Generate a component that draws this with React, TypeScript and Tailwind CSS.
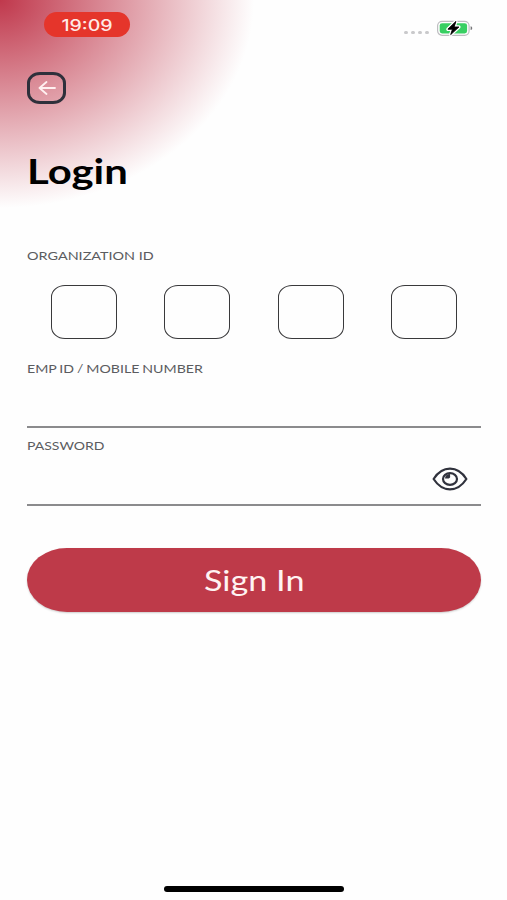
import { useState } from 'react';
import clsx from 'clsx';

const orgDigits = [0, 1, 2, 3];
const signalDots = [0, 1, 2, 3];

const BatteryIcon = () => (
  <svg width="38" height="18" viewBox="0 0 38 18" fill="none">
    <rect x="1.6" y="2.3" width="31.5" height="14" rx="4.5" stroke="#bdbdc0" strokeWidth="1.2" />
    <rect x="3.7" y="4.2" width="27.4" height="10.2" rx="2.4" fill="#38cf62" />
    <path d="M34.6 7.3c1.2.3 1.6 1 1.6 1.9s-.4 1.6-1.6 1.9z" fill="#77777a" />
    <path d="M19.9 2.4 11.9 10.2h4.6l-1.8 5.4 8.2-7.6h-4.8z" fill="#fff" stroke="#fff" strokeWidth="3.4" strokeLinejoin="round" />
    <path d="M19.9 2.4 11.9 10.2h4.6l-1.8 5.4 8.2-7.6h-4.8z" fill="#000" stroke="#000" strokeWidth=".9" strokeLinejoin="round" />
  </svg>
);

const EyeIcon = () => (
  <svg width="36" height="24" viewBox="0 0 36 24" fill="none" stroke="#30323d">
    <path d="M1.6 12C6 5.2 11.6 1.7 18 1.7S30 5.2 34.4 12C30 18.8 24.4 22.3 18 22.3S6 18.8 1.6 12z" strokeWidth="2.2" strokeLinejoin="round" />
    <ellipse cx="18" cy="12" rx="7" ry="5.8" strokeWidth="2.2" />
    <path d="M18 7c-3 0-5 2-5 4.6h2.6c1.6 0 2.6-.9 2.6-2.2z" fill="#30323d" stroke="none" />
  </svg>
);

const StatusBar = () => (
  <div className="flex h-[72px] items-start justify-between pt-3 pr-[33px] pl-11">
    <div className="flex h-[25px] w-[86px] items-center justify-center rounded-full bg-[#e5352b]">
      <span className="scale-x-[1.22] font-['Inter'] text-[16px] leading-none font-medium text-[#ffe9e6]">19:09</span>
    </div>
    <div className="flex items-center gap-[7px] pt-[7px]">
      <div className="flex gap-[3px] pt-[9px]">
        {signalDots.map(dot => (
          <span key={dot} className="h-[3px] w-1 rounded-full bg-[#c9c9cb]" />
        ))}
      </div>
      <BatteryIcon />
    </div>
  </div>
);

const FieldLabel = ({ children, className }: { children: string; className: string }) => (
  <span className={clsx('block w-max origin-left text-[12px] leading-4 text-[#5b5c60]', className)}>{children}</span>
);

export default function App() {
  const [showPassword, setShowPassword] = useState(false);

  return (
    <main className="flex h-[900px] w-[507px] flex-col overflow-hidden bg-[#fefefe] bg-[radial-gradient(ellipse_254px_208px_at_0_0,#c0384c_0%,#fefefe_100%)] font-['Lato',sans-serif]">
      <StatusBar />

      <div className="flex flex-1 flex-col pr-[26px] pl-[27px]">
        <button aria-label="Back" className="flex h-8 w-[39px] items-center justify-center rounded-[13px/11px] border-[3px] border-[#2e303b]">
          <svg width="18" height="14" viewBox="0 0 18 14" fill="none" stroke="#fff0f0" strokeWidth="1.8" strokeLinecap="round" strokeLinejoin="round">
            <path d="M17 7H1.5M8.5 1 1.5 7l7 6" />
          </svg>
        </button>

        <h1 className="mt-[46px] w-max origin-left scale-x-[1.23] text-[34px] leading-[42px] font-bold text-black">Login</h1>

        <div className="mt-14">
          <FieldLabel className="scale-x-[1.2]">ORGANIZATION ID</FieldLabel>
          <div className="mt-[21px] flex justify-between px-6">
            {orgDigits.map(digit => (
              <input
                key={digit}
                maxLength={1}
                className="h-[54px] w-[66px] rounded-[14px/12px] border border-[#39393b] bg-transparent text-center outline-none"
              />
            ))}
          </div>
        </div>

        <div className="mt-[22px] h-[67px] border-b-2 border-[#8b8b8d]">
          <FieldLabel className="scale-x-[1.18] [word-spacing:-0.6px]">EMP ID / MOBILE NUMBER</FieldLabel>
          <input className="h-10 w-full bg-transparent outline-none" />
        </div>

        <div className="mt-2.5 h-[68px] border-b-2 border-[#8b8b8d]">
          <FieldLabel className="scale-x-[1.17]">PASSWORD</FieldLabel>
          <div className="flex h-[50px] items-center pr-[13px]">
            <input type={showPassword ? 'text' : 'password'} className="h-10 min-w-0 flex-1 bg-transparent outline-none" />
            <button aria-label="Show password" onClick={() => setShowPassword(!showPassword)}>
              <EyeIcon />
            </button>
          </div>
        </div>

        <button className="mt-[42px] flex h-16 items-center justify-center rounded-[40px/32px] bg-[#be3a49] shadow-[0_1px_2px_rgba(0,0,0,0.2)]">
          <span className="scale-x-[1.22] text-[28px] leading-none text-[#fff3f2]">Sign In</span>
        </button>
      </div>

      <div className="mb-2 ml-[164px] h-1.5 w-[180px] rounded-full bg-black" />
    </main>
  );
}
